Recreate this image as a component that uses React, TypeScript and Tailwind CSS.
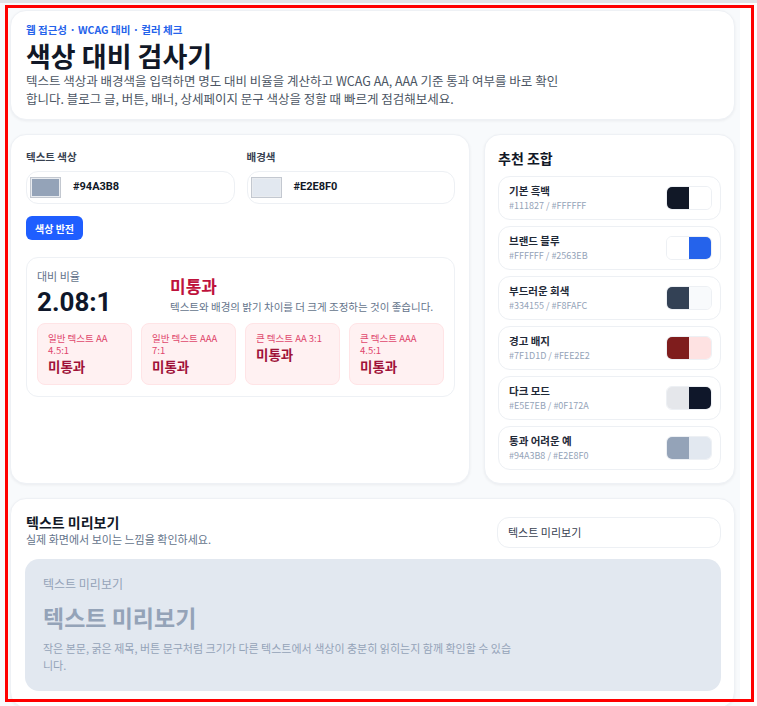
import React from "react";

const combos = [
  { name: "기본 흑백", fg: "#111827", bg: "#FFFFFF" },
  { name: "브랜드 블루", fg: "#FFFFFF", bg: "#2563EB" },
  { name: "부드러운 회색", fg: "#334155", bg: "#F8FAFC" },
  { name: "경고 배지", fg: "#7F1D1D", bg: "#FEE2E2" },
  { name: "다크 모드", fg: "#E5E7EB", bg: "#0F172A" },
  { name: "통과 어려운 예", fg: "#94A3B8", bg: "#E2E8F0" },
];

const badges = ["일반 텍스트 AA 4.5:1", "일반 텍스트 AAA 7:1", "큰 텍스트 AA 3:1", "큰 텍스트 AAA 4.5:1"];

function ColorInput({ label, value }: { label: string; value: string }) {
  return (
    <div>
      <div className="text-[10.5px] leading-[14px] font-bold text-[#374151]">{label}</div>
      <div className="mt-[7px] h-[33px] rounded-xl border border-[#edf0f4] bg-white flex items-center pl-[3px] gap-[12px]">
        <div className="w-[31px] h-[21px] border border-[#c3c8d0] p-[1px] bg-[#e9ecf0]">
          <div className="w-full h-full" style={{ backgroundColor: value }} />
        </div>
        <span className="font-['Roboto',sans-serif] text-[11px] font-bold text-[#111827]">{value}</span>
      </div>
    </div>
  );
}

export default function App() {
  return (
    <div className="relative w-[757px] h-[706px] overflow-hidden bg-white font-['Noto_Sans_CJK_KR','Noto_Sans',sans-serif]">
      <div className="h-[3px] bg-[#e1e3e6]" />
      <div className="w-[740px] h-[703px] bg-[#f8fafc] pl-[10px] pr-[5px] pt-[7px] flex flex-col gap-[14px]">
        {/* Header */}
        <div className="rounded-2xl bg-white border border-[#eef1f5] shadow-[0_1px_3px_rgba(15,23,42,0.06)] px-[15px] pt-[12px] pb-[11px]">
          <div className="text-[10.5px] leading-[14px] font-bold text-[#2563eb]">웹 접근성 · WCAG 대비 · 컬러 체크</div>
          <h1 className="mt-[3px] text-[27px] leading-[32px] font-bold text-[#111827]">색상 대비 검사기</h1>
          <p className="text-[12.5px] leading-[18px] text-[#4b5563] max-w-[540px]">
            텍스트 색상과 배경색을 입력하면 명도 대비 비율을 계산하고 WCAG AA, AAA 기준 통과 여부를 바로 확인합니다. 블로그 글, 버튼, 배너, 상세페이지 문구 색상을 정할 때 빠르게 점검해보세요.
          </p>
        </div>

        {/* Main grid */}
        <div className="grid grid-cols-[460px_251px] gap-[14px]">
          <div className="rounded-2xl bg-white border border-[#eef1f5] shadow-[0_1px_3px_rgba(15,23,42,0.06)] pl-[15px] pr-[14px] pt-[15px]">
            <div className="grid grid-cols-2 gap-[12px]">
              <ColorInput label="텍스트 색상" value="#94A3B8" />
              <ColorInput label="배경색" value="#E2E8F0" />
            </div>
            <button className="mt-[12px] h-[24px] px-[9px] rounded-md bg-[#1f5eff] text-white text-[10px] font-bold">색상 반전</button>
            <div className="mt-[17px] rounded-xl border border-[#eef1f5] px-[10px] pt-[11px] pb-[11px]">
              <div className="flex items-start">
                <div className="w-[133px] shrink-0">
                  <div className="text-[11px] leading-[14px] text-[#64748b]">대비 비율</div>
                  <div className="mt-[3px] font-['Roboto',sans-serif] text-[26px] leading-[32px] font-bold text-[#0f172a]">2.08:1</div>
                </div>
                <div className="mt-[5px]">
                  <div className="text-[17px] leading-[23px] font-bold text-[#be123c]">미통과</div>
                  <div className="mt-[2px] whitespace-nowrap text-[10.5px] leading-[15px] text-[#64748b]">텍스트와 배경의 밝기 차이를 더 크게 조정하는 것이 좋습니다.</div>
                </div>
              </div>
              <div className="mt-[5px] grid grid-cols-4 gap-[9px]">
                {badges.map((b) => (
                  <div key={b} className="h-[62px] rounded-lg bg-[#fff1f2] border border-[#ffe4e6] px-[10px] pt-[8px]">
                    <div className="text-[9.5px] leading-[12px] text-[#e0466c]">{b}</div>
                    <div className="text-[13.5px] leading-[20px] font-bold text-[#9f1239]">미통과</div>
                  </div>
                ))}
              </div>
            </div>
          </div>

          <div className="rounded-2xl bg-white border border-[#eef1f5] shadow-[0_1px_3px_rgba(15,23,42,0.06)] px-[13px] pt-[14px] pb-[13px]">
            <div className="text-[14px] leading-[18px] font-bold text-[#111827] mb-[9px]">추천 조합</div>
            <div className="flex flex-col gap-[6px]">
              {combos.map((c) => (
                <div key={c.name} className="h-[44px] rounded-xl border border-[#edf0f4] flex items-center justify-between pl-[10px] pr-[8px]">
                  <div>
                    <div className="text-[10.5px] leading-[14px] font-bold text-[#1f2937]">{c.name}</div>
                    <div className="mt-[1px] text-[9px] leading-[13px] text-[#94a3b8]">
                      {c.fg} / {c.bg}
                    </div>
                  </div>
                  <div className="flex w-[46px] h-[24px] rounded-md overflow-hidden border border-[#edf0f4]">
                    <div className="flex-1" style={{ backgroundColor: c.fg }} />
                    <div className="flex-1" style={{ backgroundColor: c.bg }} />
                  </div>
                </div>
              ))}
            </div>
          </div>
        </div>

        {/* Preview */}
        <div className="rounded-2xl bg-white border border-[#eef1f5] shadow-[0_1px_3px_rgba(15,23,42,0.06)] pl-[14px] pr-[13px] pt-[14px] pb-[16px]">
          <div className="flex items-start justify-between">
            <div className="pl-[1px]">
              <div className="text-[14px] leading-[18px] font-bold text-[#111827]">텍스트 미리보기</div>
              <div className="text-[11px] leading-[16px] text-[#64748b]">실제 화면에서 보이는 느낌을 확인하세요.</div>
            </div>
            <div className="mt-[4px] w-[224px] h-[31px] rounded-xl border border-[#edf0f4] px-[10px] flex items-center text-[11px] text-[#374151]">
              텍스트 미리보기
            </div>
          </div>
          <div className="mt-[11px] rounded-[14px] bg-[#e2e8f0] px-[18px] pt-[17px] pb-[17px]">
            <div className="text-[12px] leading-[16px] text-[#94a3b8]">텍스트 미리보기</div>
            <div className="mt-[10px] text-[23px] leading-[30px] font-bold text-[#94a3b8]">텍스트 미리보기</div>
            <p className="mt-[8px] max-w-[475px] text-[11px] leading-[17px] text-[#94a3b8]">
              작은 본문, 굵은 제목, 버튼 문구처럼 크기가 다른 텍스트에서 색상이 충분히 읽히는지 함께 확인할 수 있습니다.
            </p>
          </div>
        </div>
      </div>
      <div className="absolute left-[5px] top-[5px] w-[749px] h-[697px] border-[3px] border-[#ff0000] pointer-events-none" />
    </div>
  );
}
